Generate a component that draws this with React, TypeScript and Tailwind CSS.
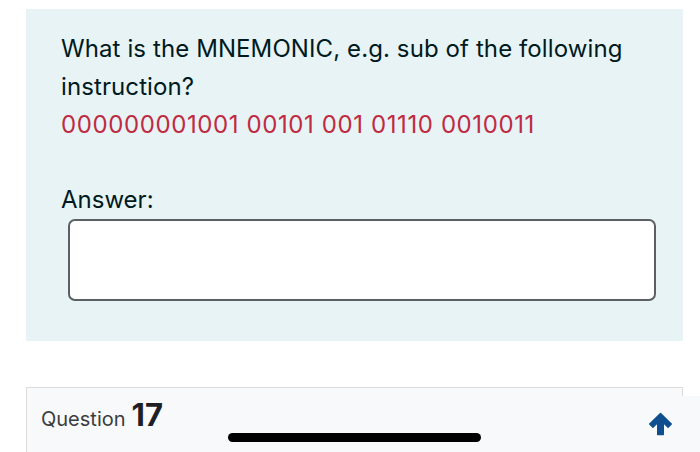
import React from 'react';

export default function App() {
  return (
    <div className="relative w-[700px] h-[452px] overflow-hidden bg-white font-['Inter',sans-serif] text-[#1d2125]">
      {/* Question formulation */}
      <div className="mt-[9px] ml-[26px] w-[657px] bg-[#e7f3f5] pl-[35px] pr-[20px] pt-[21px] pb-[40px]">
        <div className="text-[24px] leading-[38px] tracking-[0.1px] text-[#001a1e]">
          <p>What is the MNEMONIC, e.g. sub of the following instruction?</p>
          <p className="text-[#c02a43] tracking-[0.6px]">000000001001 00101 001 01110 0010011</p>
        </div>
        <div className="mt-[37px] text-[24px] leading-[38px] text-[#001a1e]">Answer:</div>
        <div className="ml-[7px] mr-[7px] h-[82px] rounded-[7px] border-2 border-[#5b5f63] bg-white" />
      </div>

      {/* Next question header */}
      <div className="mt-[46px] ml-[26px] w-[657px] h-[80px] border-l border-t border-r border-[#dcdcdc] bg-[#f8f9fa] pl-[14px] pt-[4px]">
        <div className="flex items-baseline gap-[6px]">
          <span className="text-[20px] text-[#3a3d40]">Question</span>
          <span className="text-[31px] font-bold text-[#1d2125]">17</span>
        </div>
      </div>

      {/* back-to-top button */}
      <div className="absolute right-0 top-[396px] flex h-[56px] w-[80px] justify-center bg-[#f8f9fa] pt-[16px]">
        <svg width="25" height="24" viewBox="0 0 24 24" className="fill-[#0f4f8f] stroke-[#0f4f8f]">
          <path
            d="M12 1.5 L22.8 12 L19.6 15.2 L14.8 10.6 V22.5 H9.2 V10.6 L4.4 15.2 L1.2 12 Z"
            strokeWidth="1.4"
            strokeLinejoin="round"
          />
        </svg>
      </div>

      {/* iOS home indicator */}
      <div className="absolute left-[228px] top-[433px] h-[9px] w-[253px] rounded-full bg-black" />
    </div>
  );
}
